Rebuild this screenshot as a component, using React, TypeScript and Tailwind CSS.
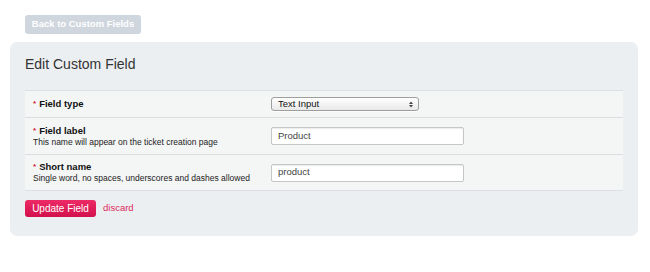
import React from "react";

const font = { fontFamily: '"Liberation Sans", Arial, Helvetica, sans-serif' };

function Req() {
  return <span className="mr-[3px] text-[8px] text-[#d21a3c] align-[1px]">*</span>;
}

function SelectBox() {
  return (
    <div className="relative flex h-[14px] w-[148px] items-center rounded-[3px] border border-[#9e9e9e] bg-gradient-to-b from-white to-[#e9e9e9] pl-[6px] text-[9.5px] text-[#111] shadow-[0_1px_0_rgba(255,255,255,0.8)]">
      Text Input
      <svg className="absolute right-[5px] top-[3px]" width="4" height="7" viewBox="0 0 4 7">
        <path d="M0 3 L2 0.5 L4 3 Z" fill="#444" />
        <path d="M0 4 L2 6.5 L4 4 Z" fill="#444" />
      </svg>
    </div>
  );
}

function TextBox({ value }: { value: string }) {
  return (
    <div className="flex h-[18px] w-[193px] items-center rounded-[2px] border border-[#c4c6c8] bg-white pl-[6px] text-[9.5px] text-[#444] shadow-[inset_0_1px_1px_rgba(0,0,0,0.08)]">
      {value}
    </div>
  );
}

export default function App() {
  return (
    <div className="h-[272px] w-[650px] bg-white pt-[15px]" style={font}>
      <div className="flex pl-[25px]">
        <button className="h-[19px] w-[116px] rounded-[3px] bg-[#cfd6de] text-[9.5px] font-bold text-white">
          Back to Custom Fields
        </button>
      </div>
      <div className="ml-[10px] mt-[8px] w-[628px] rounded-[7px] bg-[#eceff2] px-[15px] pb-[19px] pt-[13px]">
        <h1 className="text-[14px] leading-[18px] text-[#333]">Edit Custom Field</h1>
        <div className="mt-[17px] border-t border-[#dcdfe2] bg-[#f4f5f5]">
          <div className="grid h-[27px] grid-cols-[246px_1fr] items-center border-b border-[#dcdfe2]">
            <div className="pl-[8px] text-[9.5px] font-bold text-[#111]">
              <Req />Field type
            </div>
            <SelectBox />
          </div>
          <div className="grid h-[37px] grid-cols-[246px_1fr] items-center border-b border-[#dcdfe2]">
            <div className="pl-[8px]">
              <div className="text-[9.5px] leading-[12px] font-bold text-[#111]">
                <Req />Field label
              </div>
              <div className="text-[8.5px] leading-[11px] text-[#222]">
                This name will appear on the ticket creation page
              </div>
            </div>
            <TextBox value="Product" />
          </div>
          <div className="grid h-[36px] grid-cols-[246px_1fr] items-center border-b border-[#dcdfe2]">
            <div className="pl-[8px]">
              <div className="text-[9.5px] leading-[12px] font-bold text-[#111]">
                <Req />Short name
              </div>
              <div className="text-[8.5px] leading-[11px] text-[#222]">
                Single word, no spaces, underscores and dashes allowed
              </div>
            </div>
            <TextBox value="product" />
          </div>
        </div>
        <div className="mt-[9px] flex items-center gap-[7px]">
          <button className="h-[17px] w-[71px] rounded-[3px] bg-gradient-to-b from-[#ec2a66] to-[#d20f4d] text-[10px] text-white">
            Update Field
          </button>
          <span className="text-[9.5px] text-[#dd2a5c]">discard</span>
        </div>
      </div>
    </div>
  );
}
